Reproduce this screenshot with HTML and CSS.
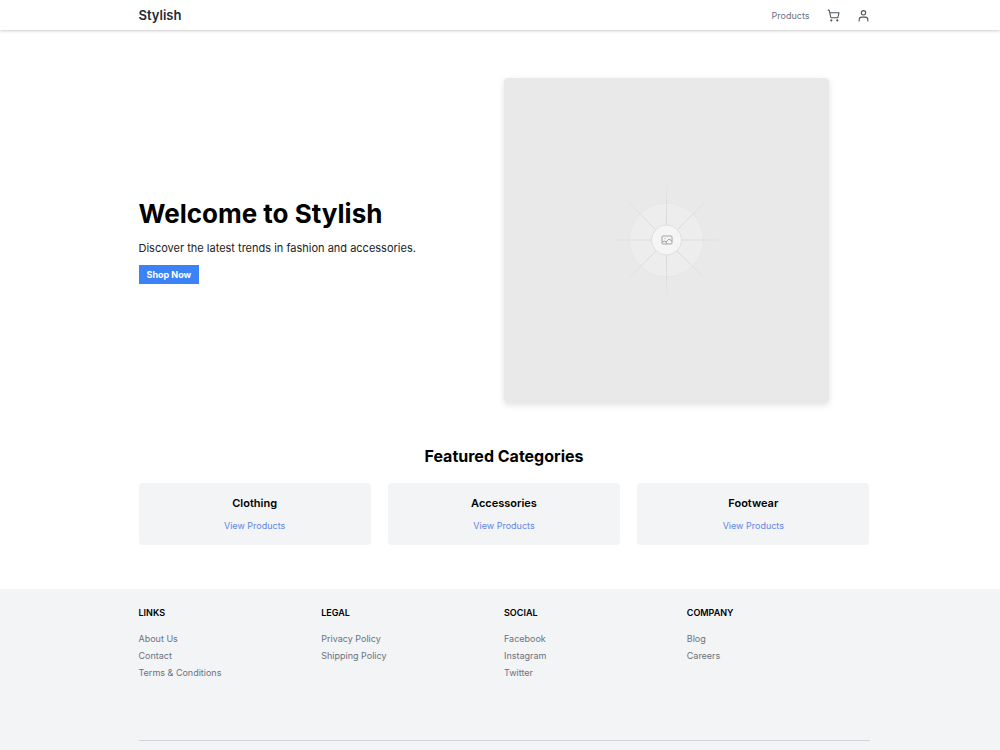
FILE: index.html
```html
<!DOCTYPE html>
<html lang="en">
<head>
  <meta charset="UTF-8">
  <meta name="viewport" content="width=device-width, initial-scale=1.0">
  <title>Stylish</title>
  <link rel="stylesheet" href="styles.css">
</head>
<body>
  <header class="site-header">
    <div class="container header-inner">
      <a class="brand" href="#">Stylish</a>
      <nav class="nav">
        <a href="#products">Products</a>
        <a href="#cart" aria-label="Cart">
          <svg class="icon" viewBox="0 0 24 24">
            <circle cx="8" cy="21" r="1"/>
            <circle cx="19" cy="21" r="1"/>
            <path d="M2.05 2.05h2l2.66 12.42a2 2 0 0 0 2 1.58h9.78a2 2 0 0 0 1.95-1.57l1.65-7.43H5.12"/>
          </svg>
        </a>
        <a href="#account" aria-label="Account">
          <svg class="icon" viewBox="0 0 24 24">
            <path d="M20 22v-2a5 5 0 0 0-5-5H9a5 5 0 0 0-5 5v2"/>
            <circle cx="12" cy="7" r="4"/>
          </svg>
        </a>
      </nav>
    </div>
  </header>

  <main>
    <section class="container hero">
      <div class="hero-text">
        <h1>Welcome to Stylish</h1>
        <p>Discover the latest trends in fashion and accessories.</p>
        <button class="shop-button" type="button">Shop Now</button>
      </div>
      <svg class="hero-image" viewBox="0 0 325 325" role="img" aria-label="Placeholder image">
        <defs>
          <radialGradient id="ray" gradientUnits="userSpaceOnUse" cx="162.500" cy="162" r="66">
            <stop offset="0.25" stop-color="#dadada"/>
            <stop offset="0.6" stop-color="#dfdfdf"/>
            <stop offset="1" stop-color="#e9e9e9"/>
          </radialGradient>
        </defs>
        <rect width="325" height="325" fill="#e9e9e9"/>
        <circle cx="162.500" cy="162" r="37" fill="#ededed" stroke="#e6e6e6"/>
        <path d="M162.500 108V216M108 162H216M116 116L209 209M209 116L116 209" stroke="url(#ray)" fill="none"/>
        <circle cx="162.500" cy="162" r="15" fill="#f5f5f5" stroke="#dedede"/>
        <g fill="none" stroke="#a3a3a3">
          <rect x="158" y="158" width="10" height="8" rx="1"/>
          <path d="M158 164l3-1 1 1 3-3 3 2M161 160v1M163 166l-1-2"/>
        </g>
      </svg>
    </section>

    <section class="container categories" id="products">
      <h2>Featured Categories</h2>
      <div class="category-grid">
        <article class="category-card">
          <h3>Clothing</h3>
          <a href="#clothing">View Products</a>
        </article>
        <article class="category-card">
          <h3>Accessories</h3>
          <a href="#accessories">View Products</a>
        </article>
        <article class="category-card">
          <h3>Footwear</h3>
          <a href="#footwear">View Products</a>
        </article>
      </div>
    </section>
  </main>

  <footer class="site-footer">
    <div class="container">
      <div class="footer-grid">
        <div>
          <h4>Links</h4>
          <ul>
            <li><a href="#">About Us</a></li>
            <li><a href="#">Contact</a></li>
            <li><a href="#">Terms &amp; Conditions</a></li>
          </ul>
        </div>
        <div>
          <h4>Legal</h4>
          <ul>
            <li><a href="#">Privacy Policy</a></li>
            <li><a href="#">Shipping Policy</a></li>
          </ul>
        </div>
        <div>
          <h4>Social</h4>
          <ul>
            <li><a href="#">Facebook</a></li>
            <li><a href="#">Instagram</a></li>
            <li><a href="#">Twitter</a></li>
          </ul>
        </div>
        <div>
          <h4>Company</h4>
          <ul>
            <li><a href="#">Blog</a></li>
            <li><a href="#">Careers</a></li>
          </ul>
        </div>
      </div>
      <hr>
    </div>
  </footer>
</body>
</html>
```
FILE: styles.css
```css
:root {
  --surface: #f3f4f6;
  --muted: #6b7280;
  --dark: #1f2937;
  --primary: #3b82f6;
}

* {
  box-sizing: border-box;
  margin: 0;
  padding: 0;
}

body {
  min-height: 100vh;
  display: flex;
  flex-direction: column;
  background: white;
  color: black;
  font-family: Inter, sans-serif;
  font-size: 9px;
  line-height: 13px;
}

a {
  color: inherit;
  text-decoration: none;
}

.container {
  width: 100%;
  max-width: 739px;
  margin: 0 auto;
  padding-left: 8px;
}

.site-header {
  box-shadow: 0 1px 3px rgba(0, 0, 0, 0.2);
}

.header-inner {
  display: flex;
  align-items: center;
  justify-content: space-between;
  height: 30px;
}

.brand {
  font-size: 13px;
  font-weight: 600;
  color: var(--dark);
}

.nav {
  display: flex;
  align-items: center;
  gap: 17px;
  color: var(--muted);
}

.icon {
  display: block;
  width: 13px;
  height: 13px;
  fill: none;
  stroke: #4b5563;
  stroke-width: 2;
  stroke-linecap: round;
  stroke-linejoin: round;
}

.hero {
  display: grid;
  grid-template-columns: 1fr 1fr;
  align-items: center;
  padding-top: 48px;
  padding-bottom: 41px;
}

.hero h1 {
  margin-bottom: 10px;
  font-size: 26px;
  font-weight: 700;
  line-height: 32px;
}

.hero p {
  margin-bottom: 8px;
  font-size: 11px;
  line-height: 17px;
  color: #222;
}

.shop-button {
  display: block;
  padding: 3px 8px;
  border: none;
  background: var(--primary);
  color: white;
  font: 700 9px/13px Inter, sans-serif;
  cursor: pointer;
}

.hero-image {
  display: block;
  width: 100%;
  max-width: 325px;
  border-radius: 4px;
  box-shadow: 0 2px 6px rgba(0, 0, 0, 0.12);
}

.categories {
  padding-bottom: 44px;
}

.categories h2 {
  margin-bottom: 15px;
  text-align: center;
  font-size: 16px;
  font-weight: 700;
  line-height: 24px;
}

.category-grid {
  display: grid;
  grid-template-columns: repeat(3, 1fr);
  gap: 17px;
}

.category-card {
  padding: 13px;
  border-radius: 4px;
  background: var(--surface);
  text-align: center;
}

.category-card h3 {
  margin-bottom: 8px;
  font-size: 11px;
  font-weight: 600;
  line-height: 15px;
}

.category-card a {
  color: #5f86e8;
}

.site-footer {
  flex: 1;
  padding-top: 17px;
  background: var(--surface);
}

.footer-grid {
  display: grid;
  grid-template-columns: repeat(4, 1fr);
  min-height: 134px;
}

.footer-grid h4 {
  margin-bottom: 13px;
  font-size: 9px;
  font-weight: 600;
  text-transform: uppercase;
}

.footer-grid ul {
  list-style: none;
}

.footer-grid li {
  margin-bottom: 4px;
  color: var(--muted);
}

.site-footer hr {
  border: none;
  border-top: 1px solid #d1d5db;
}

@media (max-width: 600px) {
  .hero,
  .category-grid {
    grid-template-columns: 1fr;
    gap: 17px;
  }
  .footer-grid {
    grid-template-columns: 1fr 1fr;
  }
}
```
